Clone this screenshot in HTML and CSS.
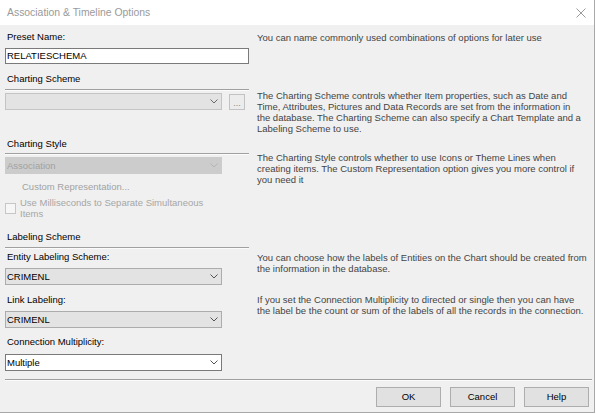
FILE: index.html
```html
<!DOCTYPE html>
<html>
<head>
<meta charset="utf-8">
<link rel="stylesheet" href="styles.css">
</head>
<body>
<div class="dialog">
  <div class="titlebar">
    <span class="title">Association &amp; Timeline Options</span>
    <svg class="close" width="10" height="10" viewBox="0 0 10 10"><path d="M0.5 0.5 L9.5 9.5 M9.5 0.5 L0.5 9.5" stroke="#9a9a9a" stroke-width="1" fill="none"/></svg>
  </div>
  <div class="content">
    <div class="grid sec-preset">
      <div class="cell">
        <div class="label">Preset Name:</div>
        <div class="input">RELATIESCHEMA</div>
      </div>
      <p class="desc">You can name commonly used combinations of options for later use</p>
    </div>

    <div class="grid sec-scheme">
      <div class="cell">
        <div class="label">Charting Scheme</div>
        <div class="sep"></div>
      </div>
      <div></div>
      <div class="cell combo-row">
        <div class="combo combo-empty">
          <span class="combo-text"></span>
          <svg class="chev" width="8" height="5" viewBox="0 0 8 5"><path d="M0.5 0.5 L4 4 L7.5 0.5" fill="none" stroke="#6a6a6a"/></svg>
        </div>
        <div class="dots">...</div>
      </div>
      <p class="desc desc-scheme">The Charting Scheme controls whether Item properties, such as Date and Time, Attributes, Pictures and Data Records are set from the information in the database. The Charting Scheme can also specify a Chart Template and a Labeling Scheme to use.</p>
    </div>

    <div class="grid sec-style">
      <div class="cell">
        <div class="label">Charting Style</div>
        <div class="sep"></div>
      </div>
      <div></div>
      <div class="cell">
        <div class="combo combo-disabled">
          <span class="combo-text">Association</span>
          <svg class="chev" width="8" height="5" viewBox="0 0 8 5"><path d="M0.5 0.5 L4 4 L7.5 0.5" fill="none" stroke="#b4b4b4"/></svg>
        </div>
        <div class="custom-rep">Custom Representation...</div>
        <div class="check-row">
          <span class="checkbox"></span>
          <span class="check-text">Use Milliseconds to Separate Simultaneous Items</span>
        </div>
      </div>
      <p class="desc desc-style">The Charting Style controls whether to use Icons or Theme Lines when creating items. The Custom Representation option gives you more control if you need it</p>
    </div>

    <div class="grid sec-label">
      <div class="cell">
        <div class="label">Labeling Scheme</div>
        <div class="sep"></div>
      </div>
      <div></div>
      <div class="cell cell-entity">
        <div class="label">Entity Labeling Scheme:</div>
        <div class="combo combo-normal">
          <span class="combo-text">CRIMENL</span>
          <svg class="chev" width="8" height="5" viewBox="0 0 8 5"><path d="M0.5 0.5 L4 4 L7.5 0.5" fill="none" stroke="#555"/></svg>
        </div>
      </div>
      <p class="desc desc-entity">You can choose how the labels of Entities on the Chart should be created from the information in the database.</p>
      <div class="cell cell-link">
        <div class="label">Link Labeling:</div>
        <div class="combo combo-normal">
          <span class="combo-text">CRIMENL</span>
          <svg class="chev" width="8" height="5" viewBox="0 0 8 5"><path d="M0.5 0.5 L4 4 L7.5 0.5" fill="none" stroke="#555"/></svg>
        </div>
      </div>
      <p class="desc desc-link">If you set the Connection Multiplicity to directed or single then you can have the label be the count or sum of the labels of all the records in the connection.</p>
      <div class="cell cell-conn">
        <div class="label">Connection Multiplicity:</div>
        <div class="combo combo-white">
          <span class="combo-text">Multiple</span>
          <svg class="chev" width="8" height="5" viewBox="0 0 8 5"><path d="M0.5 0.5 L4 4 L7.5 0.5" fill="none" stroke="#555"/></svg>
        </div>
      </div>
      <div></div>
    </div>
  </div>
  <div class="footer">
    <div class="footer-sep"></div>
    <div class="buttons">
      <div class="btn">OK</div>
      <div class="btn">Cancel</div>
      <div class="btn">Help</div>
    </div>
  </div>
</div>
</body>
</html>
```

FILE: styles.css
```css
html, body {
  margin: 0;
  padding: 0;
  background: #ffffff;
}
.dialog {
  width: 595px;
  height: 413px;
  box-sizing: border-box;
  background: #f0f0f0;
  border-right: 1px solid #a8a8a8;
  border-bottom: 1px solid #a8a8a8;
  font-family: "Liberation Sans", Arial, sans-serif;
  font-size: 9.5px;
  color: #000;
  display: flex;
  flex-direction: column;
}
.titlebar {
  height: 25px;
  background: #ffffff;
  display: flex;
  align-items: center;
  justify-content: space-between;
  padding-left: 7px;
  padding-right: 8px;
  flex: none;
}
.title {
  font-size: 10.4px;
  color: #9a9a9a;
}
.close {
  display: block;
}
.content {
  padding: 0 5px;
}
.grid {
  display: grid;
  grid-template-columns: 244px 1fr;
  column-gap: 8px;
  align-items: start;
}
.cell {
  display: flex;
  flex-direction: column;
}
.label {
  height: 12px;
  line-height: 12px;
  padding-left: 2px;
  white-space: nowrap;
}
.desc {
  margin: 0;
  line-height: 11px;
  color: #444;
  width: 332px;
}
.sep {
  height: 1px;
  background: #a0a0a0;
  border-bottom: 1px solid #fbfbfb;
  margin-top: 4px;
}
.sec-preset {
  margin-top: 6px;
}
.sec-preset .desc {
  margin-top: 1px;
}
.input {
  margin-top: 5px;
  height: 16px;
  box-sizing: border-box;
  background: #fff;
  border: 1px solid #7a7a7a;
  line-height: 14px;
  padding-left: 1px;
}
.sec-scheme {
  margin-top: 9px;
}
.combo-row {
  flex-direction: row;
  align-items: flex-start;
  margin-top: 2px;
}
.combo {
  width: 217px;
  height: 17px;
  box-sizing: border-box;
  display: flex;
  align-items: center;
  justify-content: space-between;
  padding-left: 1px;
  padding-right: 3px;
  flex: none;
}
.combo-text {
  line-height: 15px;
  white-space: nowrap;
}
.chev {
  display: block;
}
.combo-empty {
  background: #e3e3e3;
  border: 1px solid #c4c4c4;
}
.combo-disabled {
  background: #cccccc;
  border: 1px solid #cccccc;
  color: #a2a2a2;
  margin-top: 2px;
}
.combo-normal {
  background: #e3e3e3;
  border: 1px solid #acacac;
  margin-top: 5px;
}
.combo-white {
  background: #ffffff;
  border: 1px solid #7a7a7a;
  margin-top: 6px;
}
.dots {
  width: 16px;
  height: 16px;
  box-sizing: border-box;
  margin-left: 7px;
  margin-top: 1px;
  background: #ececec;
  border: 1px solid #c2c2c2;
  color: #8a8a8a;
  text-align: center;
  line-height: 16px;
  font-size: 9px;
}
.desc-scheme {
  margin-top: -1.5px;
  width: 327px;
}
.sec-style {
  margin-top: 4.5px;
}
.sec-style .sep {
  margin-top: 3px;
}
.desc-style {
  margin-top: -3.5px;
  width: 322px;
}
.custom-rep {
  margin-top: 7px;
  height: 12px;
  line-height: 12px;
  padding-left: 17px;
  color: #a2a2a2;
}
.check-row {
  display: flex;
  align-items: center;
  margin-top: 5px;
}
.checkbox {
  width: 11px;
  height: 11px;
  box-sizing: border-box;
  border: 1px solid #c6c6c6;
  background: #f6f6f6;
  flex: none;
}
.check-text {
  margin-left: 4px;
  width: 200px;
  line-height: 10.5px;
  color: #a6a6a6;
}
.sec-label {
  margin-top: 12px;
}
.cell-entity {
  padding-top: 2px;
}
.desc-entity {
  margin-top: 2.5px;
}
.cell-link {
  padding-top: 9px;
}
.desc-link {
  margin-top: 8.5px;
}
.cell-conn {
  padding-top: 8px;
}
.footer {
  padding: 0 0 0 5px;
  margin-top: 8px;
}
.footer-sep {
  width: 587px;
  height: 1px;
  background: #a0a0a0;
  border-bottom: 1px solid #fbfbfb;
}
.buttons {
  display: flex;
  justify-content: flex-end;
  gap: 9px;
  margin-top: 6px;
  padding-right: 5px;
}
.btn {
  width: 65px;
  height: 20px;
  box-sizing: border-box;
  background: #e1e1e1;
  border: 1px solid #adadad;
  text-align: center;
  line-height: 18px;
}
```
